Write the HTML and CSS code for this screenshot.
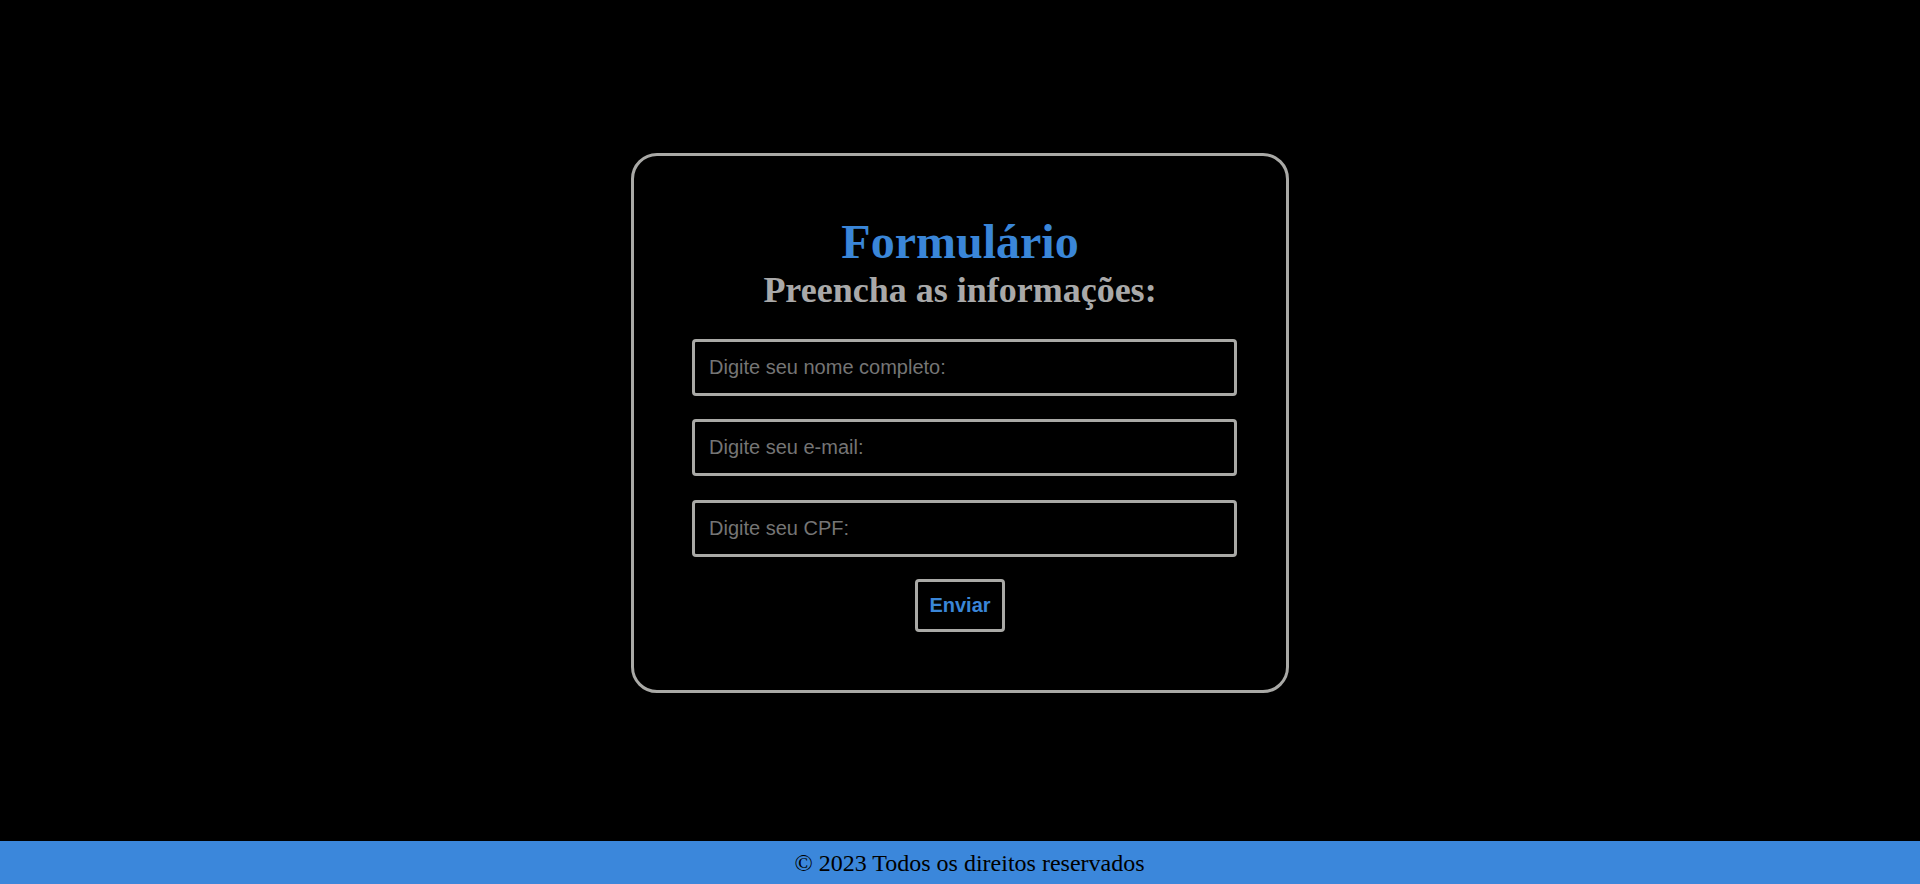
FILE: index.html
```html
<!DOCTYPE html>
<html lang="pt-BR">
<head>
<meta charset="utf-8">
<title>Formulário</title>
<link rel="stylesheet" href="styles.css">
</head>
<body>
<main class="page">
  <form class="card">
    <h1 class="title">Formulário</h1>
    <h2 class="subtitle">Preencha as informações:</h2>
    <input class="field" type="text" placeholder="Digite seu nome completo:">
    <input class="field" type="email" placeholder="Digite seu e-mail:">
    <input class="field" type="text" placeholder="Digite seu CPF:">
    <button class="send" type="button">Enviar</button>
  </form>
</main>
<footer class="footer">© 2023 Todos os direitos reservados</footer>
</body>
</html>
```

FILE: styles.css
```css
html, body {
  margin: 0;
  padding: 0;
}
body {
  background: #000;
  min-height: 100vh;
  display: flex;
  flex-direction: column;
  font-family: "Liberation Serif", "Times New Roman", serif;
}
.page {
  flex: 1;
  display: flex;
  align-items: center;
  justify-content: center;
  padding-top: 4px;
}
.card {
  width: 658px;
  box-sizing: border-box;
  border: 3px solid #a9a9a6;
  border-radius: 26px;
  padding: 58px 0;
  display: flex;
  flex-direction: column;
  align-items: center;
}
.title {
  margin: 0;
  font-size: 48px;
  font-weight: bold;
  color: #3a86d8;
  line-height: normal;
}
.subtitle {
  margin: 0 0 28px;
  font-size: 36px;
  font-weight: bold;
  color: #a9a9a9;
  line-height: normal;
}
.field {
  width: 545px;
  height: 57px;
  box-sizing: border-box;
  margin: 0 0 0 9px;
  border: 3px solid #a9a9a6;
  border-radius: 4px;
  background: #000;
  color: #ddd;
  padding: 0 14px;
  font-family: "Liberation Sans", Arial, sans-serif;
  font-size: 20px;
  outline: none;
}
.field + .field {
  margin-top: 23px;
}
.field:nth-of-type(3) {
  margin-top: 24px;
}
.field::placeholder {
  color: #757575;
}
.send {
  margin-top: 22px;
  width: 90px;
  height: 53px;
  box-sizing: border-box;
  border: 3px solid #a9a9a6;
  border-radius: 4px;
  background: #000;
  color: #3a86d8;
  font-family: "Liberation Sans", Arial, sans-serif;
  font-size: 20px;
  font-weight: bold;
  padding: 0;
  cursor: pointer;
}
.footer {
  height: 43px;
  box-sizing: border-box;
  background: #3b87db;
  color: #000;
  text-align: center;
  font-size: 24px;
  padding: 9px 0 0 19px;
  line-height: normal;
}
```
